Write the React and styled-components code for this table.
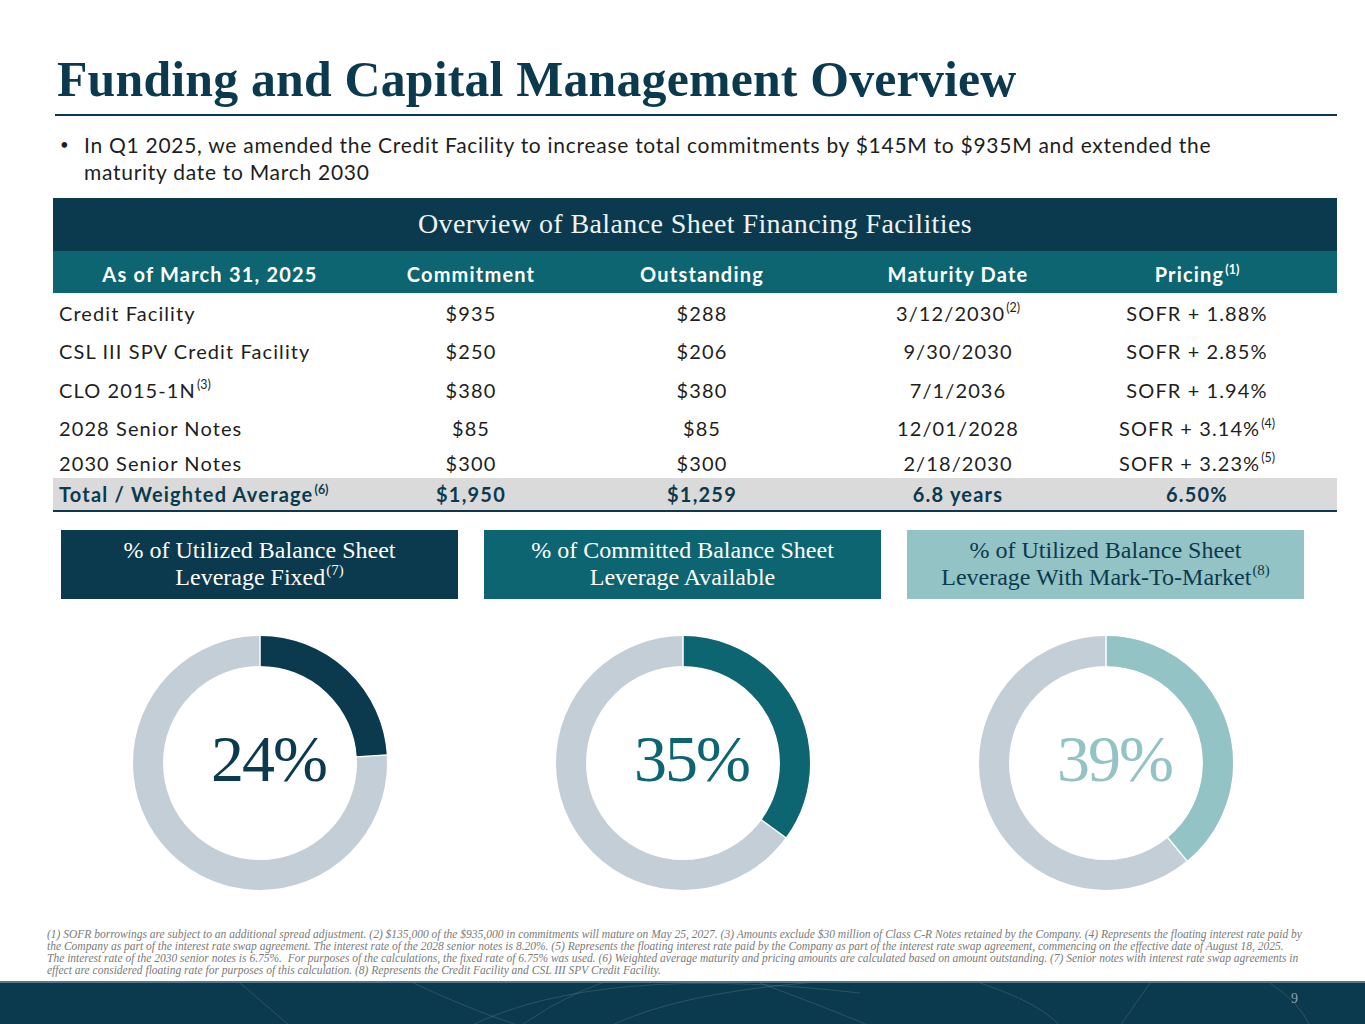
import React from "react";
import styled, { createGlobalStyle } from "styled-components";

const NAVY = "#0b3a4e";
const TEAL = "#0c6570";
const LIGHT = "#93c3c5";
const RING = "#c3ced7";

const GlobalStyle = createGlobalStyle`
  html, body { margin: 0; padding: 0; background: #fff; }
  body { width: 1365px; height: 1024px; overflow: hidden; }
  * { box-sizing: border-box; }
`;

const Slide = styled.div`
  width: 1365px;
  height: 1024px;
  display: flex;
  flex-direction: column;
  font-family: Lato, "Open Sans", sans-serif;
  color: #1e1e1e;
  background: #fff;
`;

const Header = styled.header`
  margin: 0 28px 0 55px;
  padding: 53px 0 7px 2px;
  border-bottom: 2px solid ${NAVY};
`;

const Title = styled.h1`
  margin: 0;
  font-family: "Liberation Serif", "Times New Roman", serif;
  font-weight: 700;
  font-size: 49.8px;
  line-height: 54px;
  color: ${NAVY};
  letter-spacing: 0.2px;
`;

const Bullets = styled.ul`
  list-style: none;
  margin: 15px 60px 0 60px;
  padding: 0;
`;

const Bullet = styled.li`
  display: flex;
  gap: 17px;
  font-size: 21px;
  line-height: 27px;
  letter-spacing: 0.72px;
  &::before {
    content: "•";
    width: 7px;
    flex: none;
    font-size: 15px;
  }
`;

const Table = styled.section`
  margin: 13px 28px 0 53px;
  border-bottom: 2px solid ${NAVY};
`;

const TableTitle = styled.div`
  height: 53px;
  background: ${NAVY};
  color: #eef3f5;
  font-family: "Liberation Serif", "Times New Roman", serif;
  font-size: 28px;
  letter-spacing: 0.4px;
  display: flex;
  align-items: center;
  justify-content: center;
  padding-bottom: 2px;
`;

const Grid = styled.div`
  display: grid;
  grid-template-columns: 344px 148px 314px 198px 280px;
  align-items: center;
  height: ${(p) => p.$h}px;
  padding-top: ${(p) => p.$pt || 0}px;
  background: ${(p) => p.$bg || "transparent"};
  color: ${(p) => p.$color || "#1e1e1e"};
  font-weight: ${(p) => (p.$bold ? 700 : 400)};
  font-size: 20px;
  letter-spacing: ${(p) => (p.$bold ? "1.2px" : "1.1px")};
`;

const Cell = styled.div`
  text-align: center;
  white-space: nowrap;
`;

const FirstCell = styled(Cell)`
  text-align: ${(p) => (p.$head ? "center" : "left")};
  padding: ${(p) => (p.$head ? "0 30px 0 0" : "0 0 0 6px")};
`;

const Sup = styled.sup`
  font-size: 0.62em;
  line-height: 0;
  vertical-align: 0.65em;
  margin-left: 1px;
  letter-spacing: 0;
`;

const Cards = styled.div`
  display: grid;
  grid-template-columns: repeat(3, 397px);
  gap: 26px;
  margin: 18px 0 0 61px;
`;

const Card = styled.div`
  display: flex;
  flex-direction: column;
  align-items: center;
`;

const Label = styled.div`
  width: 100%;
  height: 69px;
  background: ${(p) => p.$bg};
  color: ${(p) => p.$fg};
  font-family: "Liberation Serif", "Times New Roman", serif;
  font-size: 24px;
  line-height: 27px;
  text-align: center;
  display: flex;
  align-items: center;
  justify-content: center;
  padding-bottom: 2px;
`;

const DonutWrap = styled.div`
  position: relative;
  width: 254px;
  height: 254px;
  margin-top: 37px;
`;

const DonutValue = styled.div`
  position: absolute;
  inset: 0;
  display: flex;
  align-items: center;
  justify-content: center;
  font-family: "Liberation Serif", "Times New Roman", serif;
  font-size: 66px;
  letter-spacing: -2px;
  color: ${(p) => p.$color};
  padding: 0 0 8px 18px;
`;

const Spacer = styled.div`
  flex: 1;
`;

const Notes = styled.div`
  margin: 0 0 5px 47px;
  font-family: "Liberation Serif", "Times New Roman", serif;
  font-style: italic;
  font-size: 11.5px;
  line-height: 12px;
  color: #7a7a7a;
  white-space: nowrap;
`;

const Footer = styled.footer`
  position: relative;
  height: 43px;
  background: ${NAVY};
  border-top: 2px solid #55788a;
  overflow: hidden;
`;

const FooterArt = styled.svg`
  position: absolute;
  inset: 0;
`;

const PageNum = styled.div`
  position: absolute;
  right: 67px;
  top: 8px;
  font-family: "Liberation Serif", "Times New Roman", serif;
  font-size: 14px;
  color: #8fa2ad;
`;

function Donut({ pct, color }) {
  const r = 112;
  const c = 127;
  const C = 2 * Math.PI * r;
  const a = (pct / 100) * 2 * Math.PI;
  const sx = (ang, rad) => c + rad * Math.sin(ang);
  const sy = (ang, rad) => c - rad * Math.cos(ang);
  return (
    <DonutWrap>
      <svg width="254" height="254" viewBox="0 0 254 254">
        <circle cx={c} cy={c} r={r} fill="none" stroke={RING} strokeWidth="30" />
        <circle
          cx={c}
          cy={c}
          r={r}
          fill="none"
          stroke={color}
          strokeWidth="30"
          strokeDasharray={`${(pct / 100) * C} ${C}`}
          transform={`rotate(-90 ${c} ${c})`}
        />
        <line x1={sx(0, 96)} y1={sy(0, 96)} x2={sx(0, 128)} y2={sy(0, 128)} stroke="#fff" strokeWidth="1.5" />
        <line x1={sx(a, 96)} y1={sy(a, 96)} x2={sx(a, 128)} y2={sy(a, 128)} stroke="#fff" strokeWidth="1.5" />
      </svg>
      <DonutValue $color={color}>{pct}%</DonutValue>
    </DonutWrap>
  );
}

const rows = [
  { h: 39, name: "Credit Facility", c: "$935", o: "$288", m: "3/12/2030", ms: "(2)", p: "SOFR + 1.88%" },
  { h: 38, name: "CSL III SPV Credit Facility", c: "$250", o: "$206", m: "9/30/2030", p: "SOFR + 2.85%" },
  { h: 39, name: "CLO 2015-1N", ns: "(3)", c: "$380", o: "$380", m: "7/1/2036", p: "SOFR + 1.94%" },
  { h: 38, name: "2028 Senior Notes", c: "$85", o: "$85", m: "12/01/2028", p: "SOFR + 3.14%", ps: "(4)" },
  { h: 31, name: "2030 Senior Notes", c: "$300", o: "$300", m: "2/18/2030", p: "SOFR + 3.23%", ps: "(5)" },
];

export default function App() {
  return (
    <>
      <GlobalStyle />
      <Slide>
        <Header>
          <Title>Funding and Capital Management Overview</Title>
        </Header>
        <Bullets>
          <Bullet>
            <span>
              In Q1 2025, we amended the Credit Facility to increase total commitments by $145M to $935M and extended the
              <br />
              maturity date to March 2030
            </span>
          </Bullet>
        </Bullets>

        <Table>
          <TableTitle>Overview of Balance Sheet Financing Facilities</TableTitle>
          <Grid $h={42} $pt={4} $bg={TEAL} $color="#fff" $bold>
            <FirstCell $head>As of March 31, 2025</FirstCell>
            <Cell>Commitment</Cell>
            <Cell>Outstanding</Cell>
            <Cell>Maturity Date</Cell>
            <Cell>
              Pricing<Sup>(1)</Sup>
            </Cell>
          </Grid>
          {rows.map((r) => (
            <Grid key={r.name} $h={r.h}>
              <FirstCell>
                {r.name}
                {r.ns && <Sup>{r.ns}</Sup>}
              </FirstCell>
              <Cell>{r.c}</Cell>
              <Cell>{r.o}</Cell>
              <Cell>
                {r.m}
                {r.ms && <Sup>{r.ms}</Sup>}
              </Cell>
              <Cell>
                {r.p}
                {r.ps && <Sup>{r.ps}</Sup>}
              </Cell>
            </Grid>
          ))}
          <Grid $h={32} $bg="#dadada" $color={NAVY} $bold>
            <FirstCell>
              Total / Weighted Average<Sup>(6)</Sup>
            </FirstCell>
            <Cell>$1,950</Cell>
            <Cell>$1,259</Cell>
            <Cell>6.8 years</Cell>
            <Cell>6.50%</Cell>
          </Grid>
        </Table>

        <Cards>
          <Card>
            <Label $bg={NAVY} $fg="#fff">
              <div>
                % of Utilized Balance Sheet
                <br />
                Leverage Fixed<Sup>(7)</Sup>
              </div>
            </Label>
            <Donut pct={24} color={NAVY} />
          </Card>
          <Card>
            <Label $bg={TEAL} $fg="#fff">
              <div>
                % of Committed Balance Sheet
                <br />
                Leverage Available
              </div>
            </Label>
            <Donut pct={35} color={TEAL} />
          </Card>
          <Card>
            <Label $bg={LIGHT} $fg={NAVY}>
              <div>
                % of Utilized Balance Sheet
                <br />
                Leverage With Mark-To-Market<Sup>(8)</Sup>
              </div>
            </Label>
            <Donut pct={39} color={LIGHT} />
          </Card>
        </Cards>

        <Spacer />

        <Notes>
          (1) SOFR borrowings are subject to an additional spread adjustment. (2) $135,000 of the $935,000 in commitments will mature on May 25, 2027. (3) Amounts exclude $30 million of Class C-R Notes retained by the Company. (4) Represents the floating interest rate paid by
          <br />
          the Company as part of the interest rate swap agreement. The interest rate of the 2028 senior notes is 8.20%. (5) Represents the floating interest rate paid by the Company as part of the interest rate swap agreement, commencing on the effective date of August 18, 2025.
          <br />
          The interest rate of the 2030 senior notes is 6.75%.&nbsp; For purposes of the calculations, the fixed rate of 6.75% was used. (6) Weighted average maturity and pricing amounts are calculated based on amount outstanding. (7) Senior notes with interest rate swap agreements in
          <br />
          effect are considered floating rate for purposes of this calculation. (8) Represents the Credit Facility and CSL III SPV Credit Facility.
        </Notes>

        <Footer>
          <FooterArt width="1365" height="43" viewBox="0 0 1365 43">
            <g fill="none" stroke="#ffffff" strokeOpacity="0.13" strokeWidth="1">
              <path d="M240 0 L290 43" />
              <path d="M300 -60 Q420 10 520 43" />
              <path d="M470 43 Q600 -20 860 10" />
              <path d="M520 43 Q640 -40 760 -10" />
              <path d="M760 0 Q840 30 870 43" />
              <path d="M610 43 Q700 0 900 -5" />
              <path d="M980 0 Q1040 20 1060 43" />
              <path d="M1150 0 L1120 43" />
              <path d="M1270 0 Q1300 20 1310 43" />
            </g>
          </FooterArt>
          <PageNum>9</PageNum>
        </Footer>
      </Slide>
    </>
  );
}
